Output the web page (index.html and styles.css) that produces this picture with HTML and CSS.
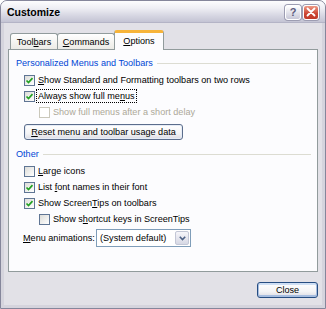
FILE: index.html
```html
<!DOCTYPE html>
<html lang="en">
<head>
    <meta charset="UTF-8">
    <title>Customize</title>
    <link rel="stylesheet" href="styles.css">
</head>
<body>
    <div class="window">
        <div class="titlebar">
            <span class="title">Customize</span>
            <div class="caption-buttons">
                <span class="cap-btn help">?</span>
                <span class="cap-btn close">
                    <svg width="10" height="10" viewBox="0 0 10 10"><path d="M1.5 1.5 L8.5 8.5 M8.5 1.5 L1.5 8.5" stroke="#fff" stroke-width="1.8" stroke-linecap="round"/></svg>
                </span>
            </div>
        </div>

        <div class="client">
            <div class="tabs">
                <div class="tab">Tool<u>b</u>ars</div>
                <div class="tab"><u>C</u>ommands</div>
                <div class="tab active"><u>O</u>ptions</div>
            </div>

            <div class="panel">
                <div class="group-title"><span>Personalized Menus and Toolbars</span></div>
                <label class="check first">
                    <span class="box"><svg width="9" height="9" viewBox="0 0 9 9"><path d="M1.5 4.5 L3.5 6.5 L7.5 2.2" fill="none" stroke="#21a121" stroke-width="1.7"/></svg></span>
                    <span><u>S</u>how Standard and Formatting toolbars on two rows</span>
                </label>
                <label class="check">
                    <span class="box"><svg width="9" height="9" viewBox="0 0 9 9"><path d="M1.5 4.5 L3.5 6.5 L7.5 2.2" fill="none" stroke="#21a121" stroke-width="1.7"/></svg></span>
                    <span class="focus">Always show full me<u>n</u>us</span>
                </label>
                <label class="check sub disabled">
                    <span class="box"></span>
                    <span>Show full menus after a short delay</span>
                </label>
                <button class="btn reset"><u>R</u>eset menu and toolbar usage data</button>

                <div class="group-title other"><span>Other</span></div>
                <label class="check first">
                    <span class="box"></span>
                    <span><u>L</u>arge icons</span>
                </label>
                <label class="check">
                    <span class="box"><svg width="9" height="9" viewBox="0 0 9 9"><path d="M1.5 4.5 L3.5 6.5 L7.5 2.2" fill="none" stroke="#21a121" stroke-width="1.7"/></svg></span>
                    <span>List <u>f</u>ont names in their font</span>
                </label>
                <label class="check">
                    <span class="box"><svg width="9" height="9" viewBox="0 0 9 9"><path d="M1.5 4.5 L3.5 6.5 L7.5 2.2" fill="none" stroke="#21a121" stroke-width="1.7"/></svg></span>
                    <span>Show Screen<u>T</u>ips on toolbars</span>
                </label>
                <label class="check sub">
                    <span class="box"></span>
                    <span>Show s<u>h</u>ortcut keys in ScreenTips</span>
                </label>

                <div class="combo-row">
                    <span class="combo-label"><u>M</u>enu animations:</span>
                    <div class="combo">
                        <span class="combo-text">(System default)</span>
                        <span class="combo-arrow">
                            <svg width="7" height="5" viewBox="0 0 7 5"><path d="M0.8 0.8 L3.5 3.6 L6.2 0.8" fill="none" stroke="#4d6185" stroke-width="1.6"/></svg>
                        </span>
                    </div>
                </div>
            </div>

            <div class="footer">
                <button class="btn default">Close</button>
            </div>
        </div>
    </div>
</body>
</html>
```

FILE: styles.css
```css
:root {
    --face: #e2e1e7;
    --panel-border: #919b9c;
    --group-blue: #0046d5;
    --disabled: #aca899;
}

* {
    box-sizing: border-box;
}

body {
    margin: 0;
    background: #ffffff;
    font-family: 'Liberation Sans', Arial, sans-serif;
    font-size: 9.1px;
    color: #000000;
}

u {
    text-decoration: underline;
    text-underline-offset: 1px;
}

.window {
    width: 326px;
    height: 309px;
    background: var(--face);
    border: 1px solid #85869b;
    border-radius: 7px 7px 0 0;
    box-shadow: inset 0 0 0 3px #d5d4dd;
    overflow: hidden;
}

/* title bar */

.titlebar {
    height: 22px;
    display: flex;
    align-items: center;
    justify-content: space-between;
    padding: 0 6px 0 6px;
    background: linear-gradient(#fdfdfe 0%, #eeeef4 35%, #d6d6e2 70%, #c4c4d4 100%);
    border-bottom: 1px solid #b4b4c6;
}

.title {
    font-weight: bold;
    font-size: 10.5px;
    color: #000;
    padding-top: 1px;
}

.caption-buttons {
    display: flex;
    gap: 2px;
    margin-top: 1px;
}

.cap-btn {
    width: 16px;
    height: 15px;
    border-radius: 3px;
    border: 1px solid #ffffff;
    display: flex;
    align-items: center;
    justify-content: center;
    box-shadow: 0 0 0 1px #9d9db2;
}

.cap-btn.help {
    background: linear-gradient(#ffffff, #c8c8d8);
    color: #5c5c7e;
    font-weight: bold;
    font-size: 11px;
}

.cap-btn.close {
    background: linear-gradient(#ee9a86, #cc4431 60%, #c03a2a);
}

/* client area */

.client {
    padding: 7px 7px 0 7px;
}

.tabs {
    display: flex;
    align-items: flex-end;
    height: 19px;
    padding-left: 2px;
    position: relative;
    z-index: 1;
}

.tab {
    height: 16px;
    padding: 0 6px;
    display: flex;
    align-items: center;
    justify-content: center;
    border: 1px solid var(--panel-border);
    border-bottom: none;
    border-radius: 3px 3px 0 0;
    background: linear-gradient(#ffffff, #ecebe6);
}

.tab:nth-child(1) { width: 48px; }
.tab:nth-child(2) { width: 58px; margin-left: -1px; }

.tab.active {
    width: 50px;
    height: 20px;
    margin-bottom: -1px;
    margin-left: -1px;
    background: #fcfcfe;
    border-top: 3px solid #f7b43a;
    padding-bottom: 2px;
}

.panel {
    height: 223px;
    background: #fcfcfe;
    border: 1px solid var(--panel-border);
    padding: 5px 6px 0 7px;
}

.group-title {
    height: 16px;
    display: flex;
    align-items: center;
    color: var(--group-blue);
}

.group-title::after {
    content: "";
    flex: 1;
    height: 1px;
    margin-left: 4px;
    background: #dcdcd2;
}

.group-title.other {
    margin-top: 6px;
}

.check {
    height: 16px;
    display: flex;
    align-items: center;
    margin-left: 8px;
    white-space: nowrap;
}

.check.first {
    margin-top: 1px;
}

.check.sub {
    margin-left: 23px;
}

.box {
    width: 11px;
    height: 11px;
    flex: none;
    margin-right: 3px;
    border: 1px solid #5f7594;
    background: linear-gradient(135deg, #dcdcd8, #ffffff);
    display: flex;
    align-items: center;
    justify-content: center;
}

.check.disabled {
    color: var(--disabled);
}

.check.disabled .box {
    border-color: #cac8bb;
    background: #ffffff;
}

.focus {
    outline: 1px dotted #000;
    outline-offset: 1px;
}

/* buttons */

.btn {
    font-family: inherit;
    font-size: 9.1px;
    color: #000;
    height: 16px;
    padding: 0;
    border: 1px solid #5b6d8c;
    border-radius: 3px;
    background: linear-gradient(#ffffff 0%, #f4f4f6 60%, #dcdce4 100%);
    box-shadow: inset 0 0 0 1px #e6ecf6;
}

.btn.reset {
    display: block;
    width: 159px;
    margin: 4px 0 0 8px;
}

.btn.default {
    width: 61px;
    border-color: #264d82;
    box-shadow: inset 0 -1px 0 1px #a6bde0, inset 0 1px 0 1px #cfdff4;
}

/* combo */

.combo-row {
    display: flex;
    align-items: center;
    margin: 2px 0 0 7px;
}

.combo-label {
    width: 73px;
}

.combo {
    width: 95px;
    height: 18px;
    border: 1px solid #7f9db9;
    background: #ffffff;
    display: flex;
    align-items: center;
    justify-content: space-between;
    padding: 1px 1px 1px 3px;
}

.combo-arrow {
    width: 14px;
    height: 100%;
    border-radius: 2px;
    border: 1px solid #c3c7d6;
    background: linear-gradient(#f6f6fa, #d6d8e4);
    display: flex;
    align-items: center;
    justify-content: center;
}

.footer {
    display: flex;
    justify-content: flex-end;
    padding-top: 10px;
}
```
